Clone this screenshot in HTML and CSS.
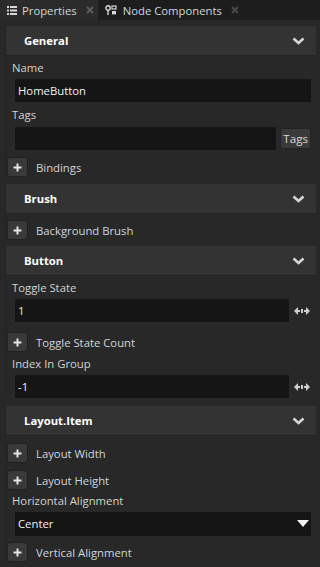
FILE: index.html
```html
<!DOCTYPE html>
<html lang="en">

<head>
    <meta charset="UTF-8">
    <meta name="viewport" content="width=device-width, initial-scale=1.0">
    <title>Properties</title>
    <link rel="stylesheet" href="styles.css">
</head>

<body>
    <div class="tabs">
        <div class="tab active">
            <svg class="tab-icon" width="10" height="9" viewBox="0 0 10 9">
                <rect x="0" y="0" width="2" height="2" fill="#d8d8d8" />
                <rect x="3" y="0" width="7" height="2" fill="#d8d8d8" />
                <rect x="0" y="3.5" width="2" height="2" fill="#d8d8d8" />
                <rect x="3" y="3.5" width="7" height="2" fill="#d8d8d8" />
                <rect x="0" y="7" width="2" height="2" fill="#d8d8d8" />
                <rect x="3" y="7" width="7" height="2" fill="#d8d8d8" />
            </svg>
            <span>Properties</span>
            <svg class="tab-close" width="8" height="8" viewBox="0 0 8 8">
                <path d="M1 1 L7 7 M7 1 L1 7" stroke="#5c5c5c" stroke-width="2" />
            </svg>
        </div>
        <div class="tab">
            <svg class="tab-icon node" width="12" height="10" viewBox="0 0 12 10">
                <circle cx="3" cy="3" r="2.2" fill="none" stroke="#d8d8d8" stroke-width="1.4" />
                <rect x="2.3" y="5" width="1.4" height="5" fill="#d8d8d8" />
                <rect x="7" y="1" width="4" height="3" fill="none" stroke="#d8d8d8" stroke-width="1.2" />
                <rect x="7" y="6" width="4" height="3.4" fill="#d8d8d8" />
            </svg>
            <span>Node Components</span>
            <svg class="tab-close" width="8" height="8" viewBox="0 0 8 8">
                <path d="M1 1 L7 7 M7 1 L1 7" stroke="#4a4a4a" stroke-width="2" />
            </svg>
        </div>
    </div>

    <div class="panel">
        <section class="group general">
            <div class="group-head">
                <span>General</span>
                <svg class="chevron" width="13" height="8" viewBox="0 0 13 8">
                    <path d="M1.5 1.5 L6.5 6 L11.5 1.5" fill="none" stroke="#d6d6d6" stroke-width="2.6" />
                </svg>
            </div>
            <div class="field-label">Name</div>
            <div class="field">
                <div class="input">HomeButton</div>
            </div>
            <div class="field-label spaced">Tags</div>
            <div class="field">
                <div class="input"></div>
                <button class="tags-btn">Tags</button>
            </div>
            <div class="add-row">
                <button class="add"><svg width="9" height="9" viewBox="0 0 9 9"><path d="M4.5 0.5 V8.5 M0.5 4.5 H8.5" stroke="#e6e6e6" stroke-width="2" /></svg></button>
                <span>Bindings</span>
            </div>
        </section>

        <section class="group">
            <div class="group-head">
                <span>Brush</span>
                <svg class="chevron" width="13" height="8" viewBox="0 0 13 8">
                    <path d="M1.5 1.5 L6.5 6 L11.5 1.5" fill="none" stroke="#d6d6d6" stroke-width="2.6" />
                </svg>
            </div>
            <div class="add-row tight">
                <button class="add"><svg width="9" height="9" viewBox="0 0 9 9"><path d="M4.5 0.5 V8.5 M0.5 4.5 H8.5" stroke="#e6e6e6" stroke-width="2" /></svg></button>
                <span>Background Brush</span>
            </div>
        </section>

        <section class="group button-group">
            <div class="group-head">
                <span>Button</span>
                <svg class="chevron" width="13" height="8" viewBox="0 0 13 8">
                    <path d="M1.5 1.5 L6.5 6 L11.5 1.5" fill="none" stroke="#d6d6d6" stroke-width="2.6" />
                </svg>
            </div>
            <div class="field-label">Toggle State</div>
            <div class="field">
                <div class="input number">1</div>
                <svg class="drag-icon" width="16" height="8" viewBox="0 0 16 8">
                    <path d="M0 4 L4 0 V8 Z M4 3 H6 V5 H4 Z" fill="#cfcfcf" />
                    <rect x="7" y="2" width="2" height="4" fill="#cfcfcf" />
                    <path d="M16 4 L12 0 V8 Z M12 3 H10 V5 H12 Z" fill="#cfcfcf" />
                </svg>
            </div>
            <div class="add-row wide">
                <button class="add"><svg width="9" height="9" viewBox="0 0 9 9"><path d="M4.5 0.5 V8.5 M0.5 4.5 H8.5" stroke="#e6e6e6" stroke-width="2" /></svg></button>
                <span>Toggle State Count</span>
            </div>
            <div class="field-label">Index In Group</div>
            <div class="field">
                <div class="input">-1</div>
                <svg class="drag-icon" width="16" height="8" viewBox="0 0 16 8">
                    <path d="M0 4 L4 0 V8 Z M4 3 H6 V5 H4 Z" fill="#cfcfcf" />
                    <rect x="7" y="2" width="2" height="4" fill="#cfcfcf" />
                    <path d="M16 4 L12 0 V8 Z M12 3 H10 V5 H12 Z" fill="#cfcfcf" />
                </svg>
            </div>
        </section>

        <section class="group">
            <div class="group-head">
                <span>Layout.Item</span>
                <svg class="chevron" width="13" height="8" viewBox="0 0 13 8">
                    <path d="M1.5 1.5 L6.5 6 L11.5 1.5" fill="none" stroke="#d6d6d6" stroke-width="2.6" />
                </svg>
            </div>
            <div class="add-row">
                <button class="add"><svg width="9" height="9" viewBox="0 0 9 9"><path d="M4.5 0.5 V8.5 M0.5 4.5 H8.5" stroke="#e6e6e6" stroke-width="2" /></svg></button>
                <span>Layout Width</span>
            </div>
            <div class="add-row">
                <button class="add"><svg width="9" height="9" viewBox="0 0 9 9"><path d="M4.5 0.5 V8.5 M0.5 4.5 H8.5" stroke="#e6e6e6" stroke-width="2" /></svg></button>
                <span>Layout Height</span>
            </div>
            <div class="field-label short">Horizontal Alignment</div>
            <div class="field">
                <div class="input select">
                    <span>Center</span>
                    <svg width="12" height="7" viewBox="0 0 12 7">
                        <path d="M0 0 H12 L6 7 Z" fill="#f2f2f2" />
                    </svg>
                </div>
            </div>
            <div class="add-row">
                <button class="add"><svg width="9" height="9" viewBox="0 0 9 9"><path d="M4.5 0.5 V8.5 M0.5 4.5 H8.5" stroke="#e6e6e6" stroke-width="2" /></svg></button>
                <span>Vertical Alignment</span>
            </div>
        </section>
    </div>
</body>

</html>
```

FILE: styles.css
```css
body {
    margin: 0;
    background-color: #1e1e1e;
    color: #d2d2d2;
    font-family: "Open Sans", "Noto Sans", sans-serif;
    font-size: 11.3px;
    width: 320px;
    height: 567px;
    overflow: hidden;
}

/* tab strip */
.tabs {
    display: flex;
    height: 20px;
    background-color: #1d1d1d;
}

.tab {
    display: flex;
    align-items: center;
    padding: 0 4px 0 7px;
    color: #cdd6de;
    white-space: nowrap;
}

.tab.active {
    background-color: #2b2b2b;
}

.tab-icon {
    margin-right: 5px;
}

.tab-icon.node {
    margin-right: 6px;
}

.tab-close {
    margin-left: 9px;
}

/* property panel */
.panel {
    background-color: #282828;
    height: 547px;
    padding: 6px 4px 0 5px;
}

.group {
    border-left: 1px solid #232323;
    margin-bottom: 6px;
}

.group.general {
    margin-bottom: 7px;
}

.group.button-group {
    margin-bottom: 8px;
}

.group-head {
    display: flex;
    align-items: center;
    justify-content: space-between;
    height: 30px;
    padding: 0 11px 0 18px;
    background-color: #333333;
    border-bottom: 1px solid #232323;
    box-sizing: border-box;
    color: #ffffff;
    font-weight: bold;
}

.field-label {
    height: 23px;
    line-height: 23px;
    padding-left: 6px;
}

.field-label.spaced {
    height: 25px;
    line-height: 26px;
}

.field-label.short {
    height: 22px;
    line-height: 21px;
}

.field {
    display: flex;
    align-items: center;
    height: 23px;
    padding: 0 5px 0 9px;
}

.input {
    flex: 1;
    height: 23px;
    line-height: 23px;
    padding-left: 3px;
    background-color: #151515;
    color: #f2f2f2;
}

.input.number {
    color: #f5e9b8;
}

.input.select {
    display: flex;
    align-items: center;
    justify-content: space-between;
    height: 24px;
    padding-right: 2px;
}

.tags-btn {
    margin-left: 4px;
    height: 21px;
    padding: 0 2px;
    font-family: inherit;
    font-size: 11.6px;
    color: #d8d8d8;
    background-color: #3a3a3a;
    border: 1px solid #222;
    border-radius: 3px;
}

.drag-icon {
    margin: 0 1px 0 5px;
}

.add-row {
    display: flex;
    align-items: center;
    height: 20px;
    padding-top: 7px;
    color: #cdd6de;
}

.add-row.tight {
    padding-top: 6px;
}

.add-row.wide {
    padding-top: 10px;
}

.add {
    display: flex;
    align-items: center;
    justify-content: center;
    width: 21px;
    height: 20px;
    margin: 0 8px 0 1px;
    padding: 0;
    background-color: #393939;
    border: 1px solid #202020;
    border-radius: 3px;
}
```
